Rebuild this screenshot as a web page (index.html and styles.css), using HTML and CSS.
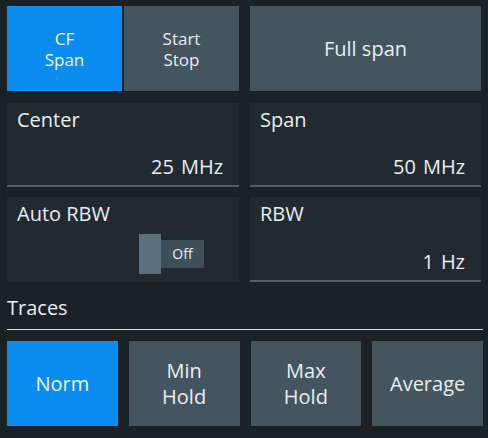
FILE: index.html
```html
<!DOCTYPE html>
<html lang="en">
<head>
    <meta charset="UTF-8">
    <meta name="viewport" content="width=device-width, initial-scale=1.0">
    <title>Frequency settings</title>
    <link rel="stylesheet" href="styles.css">
</head>
<body>
    <div class="panel">
        <div class="row">
            <div class="seg">
                <button class="btn btn-small btn-active">CF<br>Span</button>
                <button class="btn btn-small">Start<br>Stop</button>
            </div>
            <button class="btn">Full span</button>
        </div>

        <div class="row row-fields">
            <div class="field">
                <div class="field-label">Center</div>
                <div class="field-value"><span>25</span><span>MHz</span></div>
            </div>
            <div class="field">
                <div class="field-label">Span</div>
                <div class="field-value"><span>50</span><span>MHz</span></div>
            </div>
        </div>

        <div class="row row-fields2">
            <div class="field field-plain">
                <div class="field-label">Auto RBW</div>
                <div class="toggle">
                    <span class="toggle-knob"></span>
                    <span class="toggle-track">Off</span>
                </div>
            </div>
            <div class="field">
                <div class="field-label">RBW</div>
                <div class="field-value"><span>1</span><span>Hz</span></div>
            </div>
        </div>

        <div class="section">Traces</div>

        <div class="traces">
            <button class="btn btn-active">Norm</button>
            <button class="btn">Min<br>Hold</button>
            <button class="btn">Max<br>Hold</button>
            <button class="btn">Average</button>
        </div>
    </div>
</body>
</html>
```

FILE: styles.css
```css
body {
    margin: 0;
    background-color: #1b2227;
    font-family: "Open Sans", "Noto Sans", sans-serif;
    color: #e9eef1;
}
.panel {
    padding: 6px 7px;
}
.row {
    display: grid;
    grid-template-columns: 232px 231px;
    column-gap: 11px;
    height: 85px;
}
.row-fields {
    margin-top: 12px;
    height: 84px;
}
.row-fields2 {
    margin-top: 10px;
}
.seg {
    display: flex;
    gap: 2px;
}
.seg .btn {
    flex: 1;
}
.btn {
    border: none;
    margin: 0;
    padding: 0;
    background-color: #45555f;
    color: #e9eef1;
    font-family: inherit;
    font-size: 20px;
    line-height: 26px;
    text-align: center;
}
.btn-small {
    font-size: 17px;
    line-height: 21px;
}
.btn-active {
    background-color: #0a8cf0;
    color: #eef6fd;
}
.field {
    display: flex;
    flex-direction: column;
    justify-content: space-between;
    background-color: #222a31;
    border-bottom: 2px solid #4e606c;
    padding: 3px 16px 5px 10px;
    font-size: 20px;
    line-height: 27px;
}
.field-plain {
    border-bottom: none;
    padding-bottom: 8px;
}
.field-value {
    display: flex;
    justify-content: flex-end;
    gap: 7px;
}
.toggle {
    display: flex;
    align-items: center;
    align-self: flex-end;
    margin-right: 19px;
}
.toggle-knob {
    width: 22px;
    height: 40px;
    background-color: #5b707e;
}
.toggle-track {
    width: 43px;
    height: 28px;
    background-color: #3e4f5a;
    font-size: 14px;
    line-height: 28px;
    text-align: center;
}
.section {
    margin-top: 12px;
    margin-right: -2px;
    padding-bottom: 7px;
    border-bottom: 1px solid #d9dee1;
    font-size: 20px;
    line-height: 28px;
}
.traces {
    display: grid;
    grid-template-columns: repeat(4, 1fr);
    column-gap: 11px;
    margin-top: 11px;
    margin-right: -2px;
    height: 85px;
}
```
